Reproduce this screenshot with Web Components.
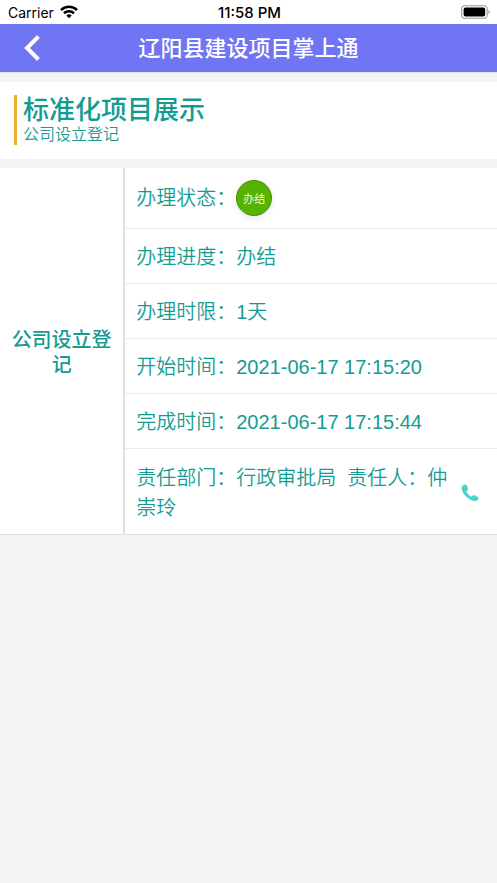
<!DOCTYPE html>
<html lang="zh-CN">
<head>
<meta charset="utf-8">
<meta name="viewport" content="width=device-width, initial-scale=1">
<title>辽阳县建设项目掌上通</title>
<style>
  html { background: #f4f4f4; }
  body { margin: 0; color: #149c92; font-family: "Liberation Sans", "Noto Sans CJK SC", sans-serif; font-size: 20px; line-height: 30px; }
</style>
</head>
<body>
<project-page></project-page>

<script>
const define = (name, html) => {
  const template = document.createElement('template');
  template.innerHTML = html;
  customElements.define(name, class extends HTMLElement {
    constructor() {
      super();
      this.attachShadow({ mode: 'open' }).append(template.content.cloneNode(true));
    }
  });
};

define('status-bar', `
  <style>
    :host { display: grid; grid-template-columns: 1fr auto 1fr; align-items: center; height: 24px; padding: 0 6px 0 8px; background: #fff; color: #000; font: 14px/24px Inter, sans-serif; }
    .left { display: flex; align-items: center; gap: 6px; }
    .left span, .time { padding-top: 2px; line-height: 22px; }
    .time { font-size: 15px; font-weight: 500; }
    .battery { justify-self: end; }
    svg { display: block; }
  </style>
  <div class="left"><span>Carrier</span>
    <svg width="18" height="14" viewBox="0 0 18 14" fill="none" stroke="#000" stroke-width="2.6" aria-hidden="true">
      <path d="M1 5.1A11.4 11.4 0 0 1 17 5.1"/><path d="M4 8.2A7.2 7.2 0 0 1 14 8.2"/>
      <path d="M9 13.3 6.3 10.6a3.9 3.9 0 0 1 5.4 0z" fill="#000" stroke="none"/>
    </svg>
  </div>
  <span class="time">11:58 PM</span>
  <svg class="battery" width="30" height="14" viewBox="0 0 30 14" aria-hidden="true">
    <rect x=".6" y=".7" width="25.6" height="12.6" rx="3.6" fill="#fff" stroke="#999" stroke-width="1.1"/>
    <rect x="2.6" y="2.6" width="21.6" height="8.8" rx="1.8"/>
    <path d="M27.5 5v4c1.6-.5 1.6-3.500 0-4z" fill="#888"/>
  </svg>`);

define('nav-bar', `
  <style>
    :host { display: grid; grid-template-columns: 64px 1fr 64px; align-items: center; height: 48px; background: #7075f3; border-bottom: 1px solid #e2e2f3; color: #fff; }
    button { display: grid; place-items: center; height: 48px; padding: 0; border: 0; background: none; color: inherit; }
    h1 { margin: 0; padding-top: 2px; font-size: 22px; line-height: 46px; font-weight: 500; text-align: center; }
  </style>
  <button type="button" aria-label="返回">
    <svg width="18" height="26" viewBox="0 0 18 26" fill="none" stroke="currentColor" stroke-width="4" aria-hidden="true"><path d="M15.500 1.500 4 13l11.500 11.500"/></svg>
  </button>
  <h1><slot></slot></h1>`);

define('section-heading', `
  <style>
    :host { display: block; margin: 9px 0; padding: 13px 14px 14px; background: #fff; }
    div { padding-left: 6px; border-left: 3px solid #eaaf34; }
    h2, p { margin: 0; }
    h2 { padding-top: 1px; font-size: 26px; line-height: 28px; font-weight: 500; }
    p { font-size: 16px; line-height: 21px; font-weight: 350; }
  </style>
  <div><h2><slot></slot></h2><p><slot name="sub"></slot></p></div>`);

define('status-badge', `
  <style>
    :host { display: grid; place-items: center; box-sizing: border-box; width: 36px; height: 36px; padding-top: 2px; border: 1px solid #3f8f08; border-radius: 50%; background: #58b200; color: #fff; font-size: 11px; line-height: 16px; box-shadow: 0 2px 6px #0000001a; }
  </style>
  <slot></slot>`);

define('phone-link', `
  <style>
    :host { display: block; }
    a { display: block; color: #4cd2c9; }
    svg { display: block; }
  </style>
  <a href="tel:" aria-label="拨打电话">
    <svg width="18" height="18" viewBox="0 0 18 18" fill="currentColor" aria-hidden="true">
      <path d="M2.500.9C4 .2 5.500.8 6.200 2.200l.7 1.700c.4 1.300.1 2.200-1 2.800-.6.400-.6.900-.2 1.500 1 1.700 2.300 3 4 4.100.6.400 1.100.400 1.500-.2.800-1 1.800-1.100 2.900-.6l2.400 1.300c1.300.8 1.400 2 .4 3-1.300 1.300-3 1.600-4.900.9C6.700 14.900 2.600 10.900.9 5.700.3 3.700.7 1.900 2.500.9z"/>
    </svg>
  </a>`);

define('detail-row', `
  <style>
    :host { display: flex; align-items: center; gap: 12px; padding: 13px 12px 11px 11px; border-bottom: 1px solid #ebebeb; font-weight: 350; }
    :host([badge]) { padding-top: 12px; padding-bottom: 12px; }
    :host(:last-child) { padding: 14px 18px 11px 11px; border-bottom: 0; }
    .text { flex: 1; display: flex; align-items: center; }
    :host([wrap]) .text { display: block; }
  </style>
  <div class="text"><slot name="label"></slot><span><slot></slot></span></div>
  <slot name="action"></slot>`);

define('detail-panel', `
  <style>
    :host { display: grid; grid-template-columns: calc(25% + 1px) 1fr; background: #fff; border-bottom: 1px solid #e2e2e2; }
    h3 { display: grid; place-items: center; margin: 0; padding: 3px 10px 0; border-right: 2px solid #e0e0e0; font-size: 20px; line-height: 25px; font-weight: 500; text-align: center; }
  </style>
  <h3><span><slot name="title"></slot></span></h3>
  <div><slot></slot></div>`);

define('project-page', `
  <style>
    :host { display: block; }
  </style>
  <status-bar></status-bar>
  <nav-bar>辽阳县建设项目掌上通</nav-bar>
  <main>
    <section-heading>标准化项目展示<span slot="sub">公司设立登记</span></section-heading>
    <detail-panel>
      <span slot="title">公司设立登记</span>
      <detail-row badge><span slot="label">办理状态：</span><status-badge>办结</status-badge></detail-row>
      <detail-row><span slot="label">办理进度：</span>办结</detail-row>
      <detail-row><span slot="label">办理时限：</span>1天</detail-row>
      <detail-row><span slot="label">开始时间：</span>2021-06-17 17:15:20</detail-row>
      <detail-row><span slot="label">完成时间：</span>2021-06-17 17:15:44</detail-row>
      <detail-row wrap>责任部门：行政审批局&nbsp; 责任人：仲崇玲<phone-link slot="action"></phone-link></detail-row>
    </detail-panel>
  </main>`);
</script>
</body>
</html>
